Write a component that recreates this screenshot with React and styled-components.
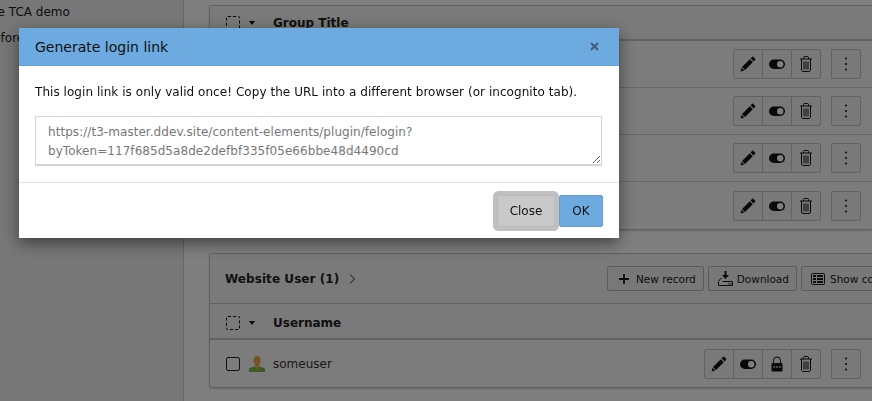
import React from 'react'
import styled, { createGlobalStyle } from 'styled-components'

const GlobalStyle = createGlobalStyle`
  html, body { margin: 0; padding: 0; background: #fff; }
  * { box-sizing: border-box; }
  body { font-family: "DejaVu Sans", Verdana, sans-serif; font-size: 12px; color: #1a1a1a; }
`

const PencilIcon = () => (
  <svg width="16" height="16" viewBox="0 0 16 16">
    <path fill="currentColor" d="M12.200.8a.7.7 0 0 1 1 0l2 2a.7.7 0 0 1 0 1L13.600 5.400 10.600 2.400zM9.800 3.200l3 3-7.800 7.800-3-3zM1.500 11.700l2.800 2.800-3.700.9z" />
  </svg>
)

const ToggleIcon = () => (
  <svg width="16" height="16" viewBox="0 0 16 16">
    <rect x="0" y="3.500" width="16" height="9.500" rx="4.750" fill="currentColor" />
    <circle cx="11.200" cy="8.250" r="3.200" fill="#fff" />
  </svg>
)

const TrashIcon = () => (
  <svg width="16" height="16" viewBox="0 0 16 16" fill="none" stroke="currentColor" strokeWidth="1">
    <path d="M2 3h12M5.500 3V1.500c0-.5.300-1 1-1h3c.7 0 1 .5 1 1V3M3.500 3v11c0 .8.600 1.500 1.400 1.500h6.200c.8 0 1.400-.7 1.400-1.500V3" />
    <path d="M6 5.500v8M8 5.500v8M10 5.500v8" />
  </svg>
)

const LockIcon = () => (
  <svg width="16" height="16" viewBox="0 0 16 16">
    <path fill="none" stroke="currentColor" strokeWidth="1" d="M4.500 7.500V4.500a3.500 3.500 0 0 1 7 0v3" />
    <rect x="2.500" y="7" width="11" height="8.500" rx="1" fill="currentColor" />
    <circle cx="5.200" cy="11" r=".9" fill="#ccc" />
    <circle cx="8" cy="11" r=".9" fill="#ccc" />
    <circle cx="10.800" cy="11" r=".9" fill="#ccc" />
  </svg>
)

const KebabIcon = () => (
  <svg width="16" height="16" viewBox="0 0 16 16">
    <circle cx="8" cy="2.500" r="1" fill="currentColor" />
    <circle cx="8" cy="8" r="1" fill="currentColor" />
    <circle cx="8" cy="13.500" r="1" fill="currentColor" />
  </svg>
)

const PlusIcon = () => (
  <svg width="10" height="10" viewBox="0 0 10 10">
    <path d="M5 0v10M0 5h10" stroke="currentColor" strokeWidth="1.800" />
  </svg>
)

const DownloadIcon = () => (
  <svg width="15" height="15" viewBox="0 0 15 15">
    <path fill="currentColor" d="M6.500 0h2v4H11L7.500 8 4 4h2.500z" />
    <path fill="none" stroke="currentColor" d="M3.500 7.500h-1l-2 3v4h14v-4H4.500" />
    <path stroke="currentColor" d="M11 12v1.500M13 12v1.500" />
  </svg>
)

const ColumnsIcon = () => (
  <svg width="14" height="14" viewBox="0 0 14 14">
    <rect x=".5" y="1.500" width="13" height="11" rx="1" fill="none" stroke="currentColor" />
    <path fill="currentColor" d="M2 3h3v2H2zM2 6h3v2H2zM2 9h3v2H2zM6 3h6v2H6zM6 6h6v2H6zM6 9h6v2H6z" />
  </svg>
)

const UserIcon = () => (
  <svg width="16" height="16" viewBox="0 0 16 16">
    <path fill="#7fb34a" d="M0 16v-2.500c0-1.400 2.300-2 5-2.700h6c2.700.7 5 1.300 5 2.700V16z" />
    <path fill="#e8a84a" d="M5.800 8h4.400v3L8 14 5.800 11z" />
    <ellipse cx="8" cy="4.600" rx="3.500" ry="4.600" fill="#e8a84a" />
  </svg>
)

const CloseIcon = () => (
  <svg width="9" height="9" viewBox="0 0 9 9">
    <path d="M1 1l7 7M8 1l-7 7" stroke="currentColor" strokeWidth="2" />
  </svg>
)

const Chevron = () => (
  <svg width="6" height="10" viewBox="0 0 6 10">
    <path d="M1 .5l4.500 4.500L1 9.500" fill="none" stroke="currentColor" strokeWidth="1" />
  </svg>
)

const Page = styled.div`
  width: 872px;
  height: 401px;
  display: flex;
  overflow: hidden;
`

const Sidebar = styled.aside`
  flex: 0 0 184px;
  background: #efefef;
  border-right: 1px solid #d0d0d0;
  overflow: hidden;
  padding-top: 4px;
`

const SideItem = styled.div`
  height: 26px;
  line-height: 16px;
  margin-left: ${(p) => p.$shift}px;
  white-space: nowrap;
`

const Main = styled.main`
  flex: 1;
  min-width: 0;
  padding-left: 25px;
  overflow: hidden;
  display: flex;
  flex-direction: column;
  gap: 23px;
  background: #fff;
`

const Panel = styled.section`
  background: #f8f8f8;
  border: 1px solid #c4c4c4;
  border-right: none;
  border-radius: 3px 0 0 3px;
  margin-top: ${(p) => p.$top || 0}px;
  box-shadow: 0 1px 2px rgba(0, 0, 0, 0.2);
`

const PanelHead = styled.div`
  height: 50px;
  display: flex;
  align-items: center;
  padding-left: 15px;
  background: #f5f5f5;
  border-bottom: 1px solid #c4c4c4;
  overflow: hidden;
`

const PanelTitle = styled.div`
  flex: 0 0 382px;
  display: flex;
  align-items: center;
  gap: 10px;
  font-weight: 700;
  letter-spacing: 0.06px;
  color: #222;
`

const HeadButton = styled.div`
  flex: 0 0 auto;
  height: 25px;
  margin-right: 4px;
  padding: 0 7px 0 ${(p) => p.$pad}px;
  display: flex;
  align-items: center;
  gap: ${(p) => p.$gap}px;
  font-size: 10.500px;
  background: #f0f0f0;
  border: 1px solid #b8b8b8;
  border-radius: 2px;
`

const TableHead = styled.div`
  height: ${(p) => p.$height}px;
  display: flex;
  align-items: center;
  padding: ${(p) => p.$nudge || 0}px 0 0 16px;
  background: #f5f5f5;
  border-bottom: 2px solid #c4c4c4;
  font-weight: 700;
  color: #222;
`

const DashedBox = styled.span`
  width: 14px;
  height: 14px;
  border: 1px dashed #111;
  border-radius: 2px;
`

const Caret = styled.span`
  margin: 0 18px 0 9px;
  border-top: 4px solid #111;
  border-left: 3.500px solid transparent;
  border-right: 3.500px solid transparent;
`

const Row = styled.div`
  height: 47px;
  display: flex;
  align-items: center;
  padding: 0 11px 0 16px;
  border-bottom: 1px solid #cfcfcf;
  &:last-child { border-bottom: none; }
`

const CheckBox = styled.span`
  width: 14px;
  height: 14px;
  margin-right: 9px;
  border: 1px solid #222;
  border-radius: 2px;
`

const RowLabel = styled.span`
  margin-left: 8px;
  flex: 1;
  color: #333;
`

const Spacer = styled.div`
  flex: 1;
`

const ButtonGroup = styled.div`
  display: flex;
  margin-left: ${(p) => p.$gap || 0}px;
`

const IconButton = styled.div`
  width: 30px;
  height: 30px;
  margin-left: -1px;
  display: flex;
  align-items: center;
  justify-content: center;
  background: #f2f2f2;
  border: 1px solid #c4c4c4;
  color: #111;
  &:first-child { border-radius: 2px 0 0 2px; }
  &:last-child { border-radius: 0 2px 2px 0; }
`

const RowActions = ({ lock }) => (
  <>
    <ButtonGroup>
      <IconButton><PencilIcon /></IconButton>
      <IconButton><ToggleIcon /></IconButton>
      {lock && <IconButton><LockIcon /></IconButton>}
      <IconButton><TrashIcon /></IconButton>
    </ButtonGroup>
    <ButtonGroup $gap={11}>
      <IconButton><KebabIcon /></IconButton>
    </ButtonGroup>
  </>
)

const Backdrop = styled.div`
  position: fixed;
  inset: 0;
  background: rgba(0, 0, 0, 0.5);
`

const Modal = styled.div`
  position: fixed;
  left: 19px;
  top: 28px;
  width: 600px;
  height: 210px;
  background: #fff;
  box-shadow: 0 5px 15px rgba(0, 0, 0, 0.5);
  display: flex;
  flex-direction: column;
`

const ModalHeader = styled.header`
  height: 38px;
  padding: 0 20px 0 16px;
  display: flex;
  align-items: center;
  justify-content: space-between;
  background: #6daae0;
  border-bottom: 1px solid #5e9cd3;
`

const ModalTitle = styled.h4`
  margin: 0;
  font-size: 14px;
  font-weight: 400;
  color: #111;
`

const Dismiss = styled.span`
  display: flex;
  color: #3f5d78;
`

const ModalBody = styled.div`
  flex: 0 0 117px;
  padding: 18px 16px 0;
  border-bottom: 1px solid #e5e5e5;
`

const Message = styled.p`
  margin: 0 0 16px;
  line-height: 16px;
  font-size: 12px;
  letter-spacing: 0.05px;
  white-space: nowrap;
  color: #111;
`

const Url = styled.textarea`
  display: block;
  width: 567px;
  height: 50px;
  padding: 6px 12px;
  border-style: solid;
  border-color: #d4d4d4;
  border-width: 1px 1px 2px 1px;
  border-radius: 1px;
  font: 12px/19px "DejaVu Sans", Verdana, sans-serif;
  letter-spacing: 0.05px;
  color: #777;
  background: #fff;
  outline: none;
`

const ModalFooter = styled.footer`
  flex: 1;
  display: flex;
  justify-content: flex-end;
  align-items: flex-start;
  gap: 4px;
  padding: 12px 16px 0;
`

const CloseButton = styled.button`
  width: 58px;
  height: 32px;
  font: 12px "DejaVu Sans", Verdana, sans-serif;
  color: #111;
  background: #c9c9c9;
  border: 1px solid #bbb;
  border-radius: 2px;
  box-shadow: 0 0 0 4px #c0c0c0;
`

const OkButton = styled.button`
  width: 44px;
  height: 32px;
  font: 12px "DejaVu Sans", Verdana, sans-serif;
  color: #111;
  background: #6daae0;
  border: 1px solid #65a2d8;
  border-radius: 2px;
  position: relative;
`

export default function App() {
  const groups = [0, 1, 2, 3]
  return (
    <>
      <GlobalStyle />
      <Page>
        <Sidebar>
          <SideItem $shift={-36}>Simple TCA demo</SideItem>
          <SideItem $shift={-15}>Before</SideItem>
        </Sidebar>
        <Main>
          <Panel $top={5}>
            <TableHead $height={35}>
              <DashedBox />
              <Caret />
              <span>Group Title</span>
            </TableHead>
            {groups.map((g) => (
              <Row key={g}>
                <Spacer />
                <RowActions />
              </Row>
            ))}
          </Panel>
          <Panel>
            <PanelHead>
              <PanelTitle>
                Website User (1) <Chevron />
              </PanelTitle>
              <HeadButton $pad={11} $gap={7}><PlusIcon /> New record</HeadButton>
              <HeadButton $pad={9} $gap={4}><DownloadIcon /> Download</HeadButton>
              <HeadButton $pad={9} $gap={5}><ColumnsIcon /> Show columns</HeadButton>
            </PanelHead>
            <TableHead $height={36} $nudge={3}>
              <DashedBox />
              <Caret />
              <span>Username</span>
            </TableHead>
            <Row>
              <CheckBox />
              <UserIcon />
              <RowLabel>someuser</RowLabel>
              <RowActions lock />
            </Row>
          </Panel>
        </Main>
      </Page>
      <Backdrop />
      <Modal>
        <ModalHeader>
          <ModalTitle>Generate login link</ModalTitle>
          <Dismiss><CloseIcon /></Dismiss>
        </ModalHeader>
        <ModalBody>
          <Message>This login link is only valid once! Copy the URL into a different browser (or incognito tab).</Message>
          <Url readOnly value="https://t3-master.ddev.site/content-elements/plugin/felogin?byToken=117f685d5a8de2defbf335f05e66bbe48d4490cd" />
        </ModalBody>
        <ModalFooter>
          <CloseButton>Close</CloseButton>
          <OkButton>OK</OkButton>
        </ModalFooter>
      </Modal>
    </>
  )
}
